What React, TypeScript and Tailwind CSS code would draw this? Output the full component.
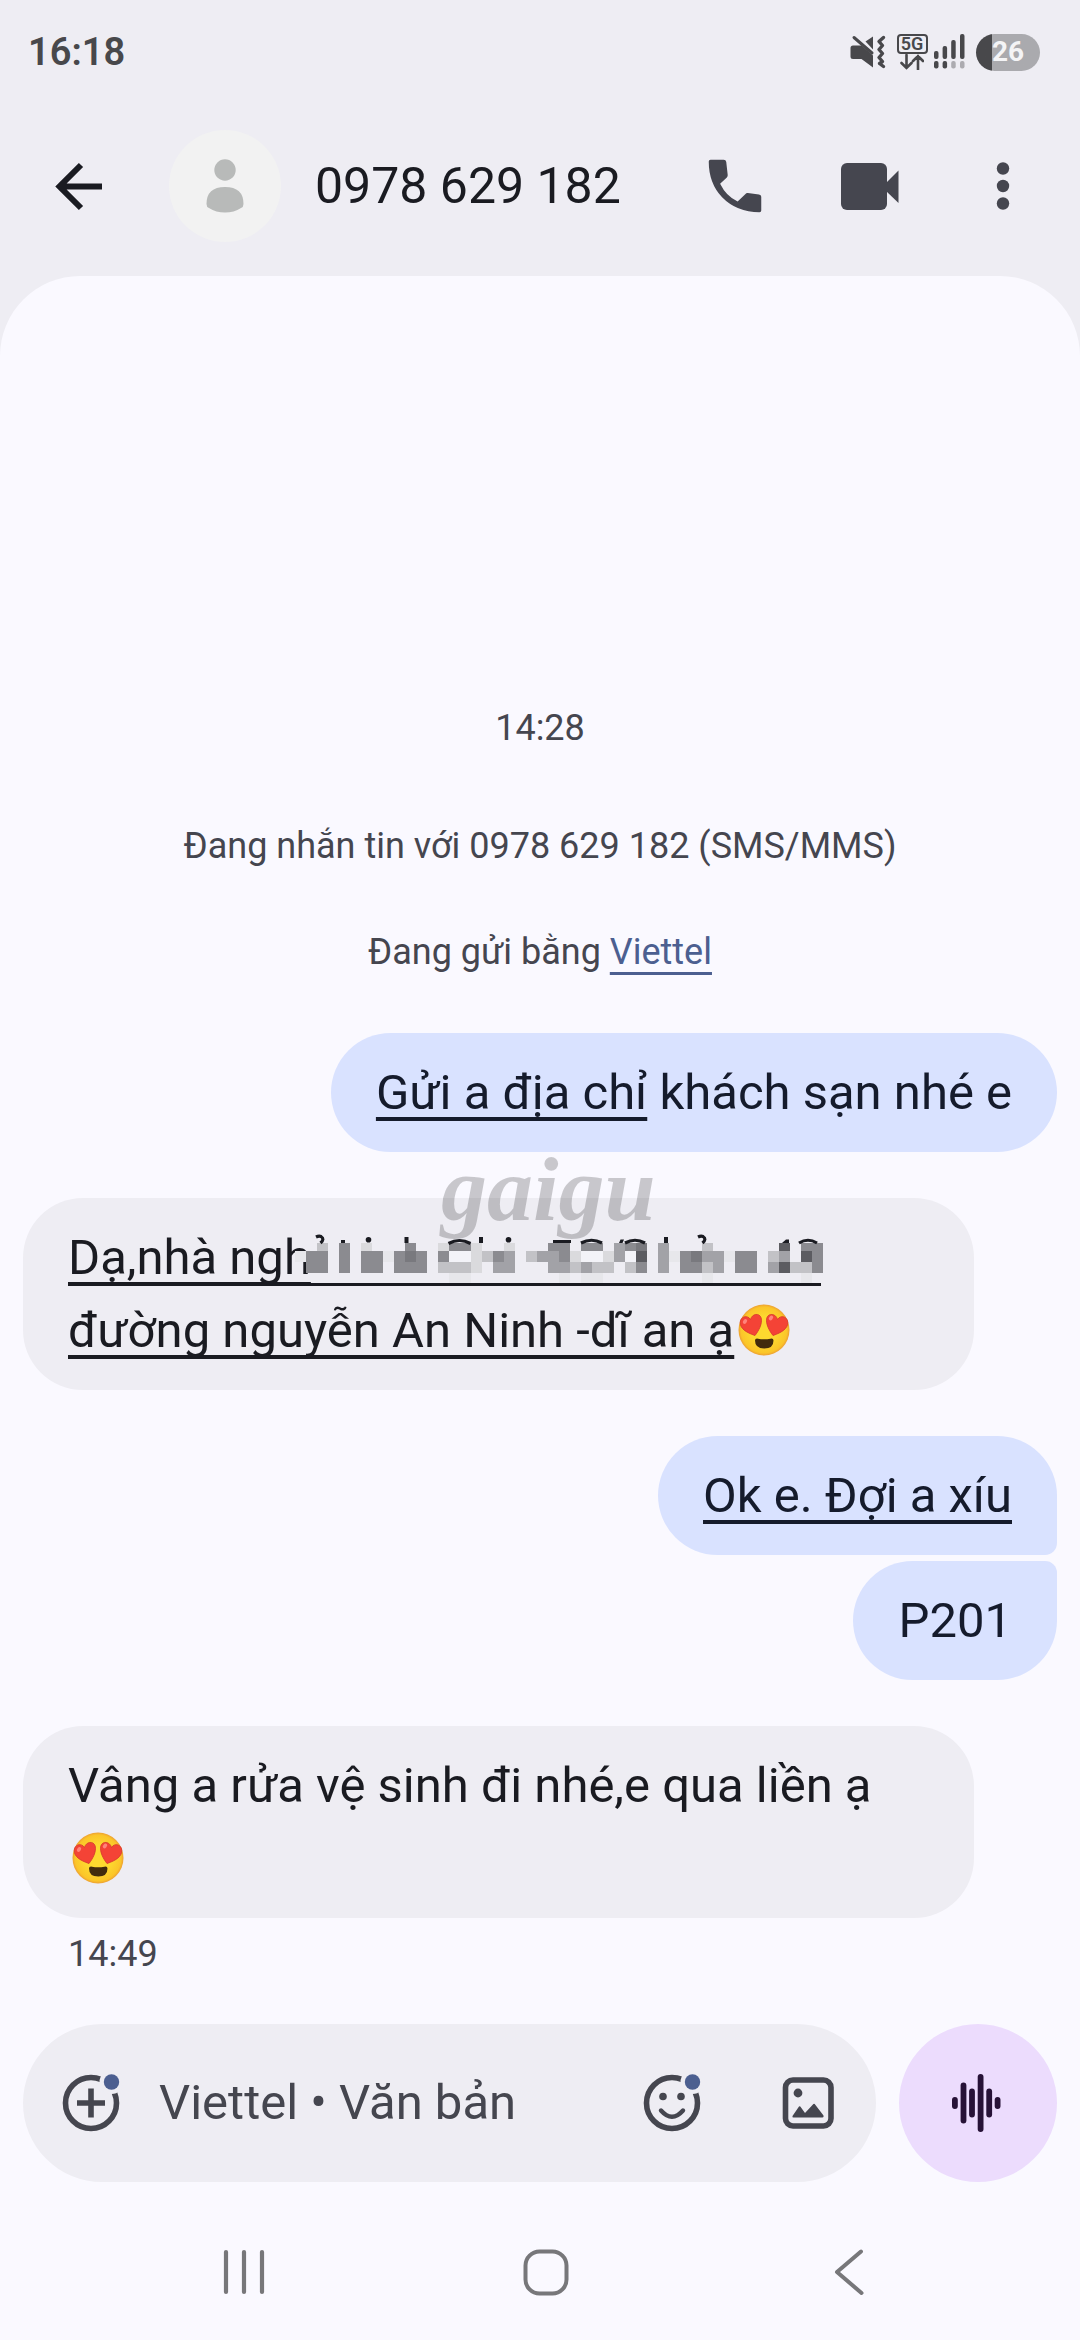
import React from 'react';

interface Message {
  id: number;
  mine: boolean;
  body: React.ReactNode;
  className?: string;
}

// One character per cell, from light (1) to dark (7), dots are empty.
const MOSAIC_ROWS = [
  { y: 13, h: 8, cells: '..3.5.2...5..2552..2...55.55.456.4...3......7.55' },
  { y: 21, h: 11, cells: '155.5.551565.5ww2354.34452ww24w7.415644155.34.75' },
  { y: 32, h: 11, cells: '.55.5.55.555.3332.44...443433.35.4.5534.55.47335' },
  { y: 43, h: 10, cells: '..............11........1.11.........1........1.' },
];

const MOSAIC_COLORS: Record<string, string> = {
  '1': '#e7e7eb',
  '2': '#dadadd',
  '3': '#c2c2c6',
  '4': '#a2a2a7',
  '5': '#8b8b90',
  '6': '#79797e',
  '7': '#5c5c61',
  w: '#f3f3f8',
};

const Mosaic: React.FC = () => (
  <svg
    width="528"
    height="60"
    viewBox="0 0 528 60"
    className="-ml-4 inline-block align-[-16px]"
    shapeRendering="crispEdges"
    aria-hidden="true"
  >
    {MOSAIC_ROWS.map((row) =>
      row.cells.split('').map((cell, i) =>
        cell === '.' ? null : (
          <rect key={`${row.y}-${i}`} x={i * 11} y={row.y} width="11" height={row.h} fill={MOSAIC_COLORS[cell]} />
        )
      )
    )}
    <g fill="#1a1b21" shapeRendering="auto">
      <rect x="46" y="10" width="4" height="3" />
      <circle cx="73.5" cy="9.7" r="2.8" />
      <rect x="109.5" y="7" width="4" height="6" />
      <rect x="184" y="7" width="4" height="6" />
      <circle cx="213.5" cy="9.7" r="2.8" />
      <rect x="258" y="10" width="18" height="3" />
      <path d="M324 13l1.5-3.500h3.500l-1.500 3.500z" />
      <rect x="369" y="7" width="4" height="6" />
      <path d="M487 13l4-3.500h3v3.500z" />
      <rect x="0" y="53" width="526" height="3" />
    </g>
    <g fill="none" stroke="#1a1b21" strokeWidth="3.2" shapeRendering="auto">
      <path d="M21 7q3-1.5 5-.5q4 2.5-.5 6.5" />
      <path d="M153.5 13.5q11-6 22 0" />
      <path d="M286 13q10.5-5.5 21 0" />
      <path d="M330 13q10-5.5 20 0" />
      <path d="M403 7q3-1.5 5-.5q4 2.5-.5 6.5" />
      <path d="M504 13q9-5.5 18 0" />
    </g>
  </svg>
);

const HeartEyes: React.FC = () => (
  <svg
    width="52"
    height="52"
    viewBox="0 0 52 52"
    className="mx-1 inline-block align-[-9px]"
    role="img"
    aria-label="😍"
  >
    <defs>
      <radialGradient id="face" cx="0.5" cy="0.5" r="0.5">
        <stop offset="0.5" stopColor="#fdd92f" />
        <stop offset="0.9" stopColor="#fbc529" />
        <stop offset="1" stopColor="#eda032" />
      </radialGradient>
    </defs>
    <circle cx="26" cy="26" r="25.5" fill="url(#face)" />
    <path
      d="M17 31.5C8 28.5 2.2 24.5 2.2 18.5C2.2 12.5 9.5 10.5 12.5 15.5C14 9.5 21.5 8.5 23.2 14C24.6 20 20.5 27 17 31.5Z"
      fill="#f44336"
      stroke="#d3352d"
      strokeWidth="0.8"
    />
    <path
      d="M35 31.5C44 28.5 49.8 24.5 49.8 18.5C49.8 12.5 42.5 10.5 39.5 15.5C38 9.5 30.5 8.5 28.8 14C27.4 20 31.5 27 35 31.5Z"
      fill="#f44336"
      stroke="#d3352d"
      strokeWidth="0.8"
    />
    <ellipse cx="7" cy="17.5" rx="2.6" ry="1.8" transform="rotate(-50 7 17.5)" fill="#ff847a" />
    <ellipse cx="33" cy="14" rx="2.6" ry="1.8" transform="rotate(-50 33 14)" fill="#ff847a" />
    <path
      d="M17 36.5Q17 34.2 20 34.7Q26 36 32.5 34.7Q35.5 34.2 35.5 36.5Q35.5 44.5 26.3 44.5Q17 44.5 17 36.5Z"
      fill="#422b0d"
    />
  </svg>
);

function Underlined({ children }: { children: React.ReactNode }) {
  return (
    <span className="underline decoration-4 underline-offset-8 [text-decoration-skip-ink:none]">{children}</span>
  );
}

const MESSAGES: Message[] = [
  {
    id: 1,
    mine: true,
    body: (
      <>
        <Underlined>Gửi a địa chỉ</Underlined> khách sạn nhé e
      </>
    ),
  },
  {
    id: 2,
    mine: false,
    className: 'mt-[46px]',
    body: (
      <>
        <Underlined>Dạ,nhà ngh</Underlined>
        <Mosaic /> <Underlined>đường nguyễn An Ninh -dĩ an ạ</Underlined>
        <HeartEyes />
      </>
    ),
  },
  {
    id: 3,
    mine: true,
    className: 'mt-[46px] rounded-br-xl',
    body: <Underlined>Ok e. Đợi a xíu</Underlined>,
  },
  { id: 4, mine: true, className: 'mt-1.5 rounded-tr-xl', body: 'P201' },
  {
    id: 5,
    mine: false,
    className: 'mt-[46px]',
    body: (
      <>
        Vâng a rửa vệ sinh đi nhé,e qua liền ạ <HeartEyes />
      </>
    ),
  },
];

const StatusBar: React.FC = () => (
  <div className="flex h-[104px] items-center justify-between pl-7 pr-10 text-[#48484b]">
    <span className="text-[38px] font-semibold leading-none">16:18</span>
    <div className="flex items-center">
      {/* muted, vibrating */}
      <svg width="36" height="34" viewBox="0 0 36 34" fill="currentColor" aria-hidden="true">
        <path d="M3 10.5h8.5L23 20.5V32.5L11.5 24H3Q.5 24 .5 21.5V13Q.5 10.5 3 10.5Z" />
        <path d="M15.5 6.5L23 1.5V14.5Z" />
        <path d="M4 2.5L22 18" stroke="currentColor" strokeWidth="3" strokeLinecap="round" />
        <path
          d="M33.5 2.5L29 6.5L32.5 10.5L29 14.5L32.5 18.5L29 22.5L32.5 26.5L29.5 28.5L33.5 31.5"
          fill="none"
          stroke="currentColor"
          strokeWidth="3.4"
          strokeLinecap="round"
          strokeLinejoin="round"
        />
      </svg>
      <div className="ml-2.5 flex w-8 flex-col items-center">
        <span className="flex h-5 w-[31px] items-center justify-center rounded-sm border-2 border-current text-lg font-semibold leading-none">
          5G
        </span>
        <svg width="24" height="16" viewBox="0 0 24 16" fill="none" stroke="currentColor" strokeWidth="2.6" aria-hidden="true">
          <path d="M6.5 1V14M1.5 9L6.5 14L11.5 9M18 15.5V2M13 7L18 2L23 7" strokeLinecap="round" />
        </svg>
      </div>
      <svg width="32" height="36" viewBox="0 0 32 36" className="ml-1.5" fill="currentColor" aria-hidden="true">
        <rect x="0" y="17" width="4.5" height="8" rx="2" />
        <rect x="8.6" y="12" width="4.5" height="13" rx="2" />
        <rect x="17.2" y="6" width="4.5" height="19" rx="2" />
        <rect x="26" y="0" width="4.5" height="25" rx="2" />
        <rect x="0" y="27" width="4.5" height="7.5" rx="2" />
        <rect x="8.6" y="27" width="4.5" height="7.5" rx="2" />
        <rect x="17.2" y="27" width="4.5" height="7.5" rx="2" opacity="0.4" />
        <rect x="26" y="27" width="4.5" height="7.5" rx="2" opacity="0.4" />
      </svg>
      <span className="ml-2.5 flex h-[37px] w-16 items-center justify-center rounded-full bg-linear-to-r from-[#48484b] from-25% to-[#aaaaae] to-25% text-[28px] font-bold leading-none text-[#f4f4f6]">
        26
      </span>
    </div>
  </div>
);

const Header: React.FC = () => (
  <header className="flex h-[172px] items-center pb-2 text-[#45464f]">
    <button aria-label="Quay lại" className="ml-11 shrink-0 text-[#1a1b21]">
      <svg width="70" height="70" viewBox="0 0 70 70" fill="none" stroke="currentColor" strokeWidth="6">
        <path d="M37 14L15.5 35.5L37 57M17 35.5H58" />
      </svg>
    </button>
    <div className="ml-[55px] flex size-28 shrink-0 items-center justify-center rounded-full bg-[#f2f2f2]">
      <svg width="38" height="56" viewBox="0 0 38 56" fill="#b8bab9" aria-hidden="true">
        <circle cx="19" cy="12" r="10.7" />
        <path d="M.5 46Q.5 29 19 29T37.5 46Q37.5 49 35 50Q28 54.5 19 54.5T3 50Q.5 49 .5 46Z" />
      </svg>
    </div>
    <h1 className="ml-[34px] flex-1 whitespace-nowrap text-[50px] leading-[60px] text-[#1a1b21]">0978 629 182</h1>
    <button aria-label="Gọi" className="shrink-0">
      <svg width="70" height="70" viewBox="0 0 24 24" fill="currentColor">
        <path d="M3.6 3H8.1Q8.9 3 9 3.8L9.5 8.2Q9.55 8.7 9.2 9.05L6.9 11.2Q9 15.5 12.9 17.3L15.6 14.7Q15.9 14.3 16.4 14.4L20.2 14.9Q21 15 21 15.7V20.4Q21 21 20.4 21Q12.5 21 7.5 15.8Q3 11 3 3.6Q3 3 3.6 3Z" />
      </svg>
    </button>
    <button aria-label="Gọi video" className="ml-16 shrink-0">
      <svg width="70" height="70" viewBox="0 0 70 70" fill="currentColor">
        <rect x="7" y="12" width="46" height="47" rx="6" />
        <path d="M52 32L64.5 19.5V52L52 40Z" />
      </svg>
    </button>
    <button aria-label="Tùy chọn khác" className="ml-16 mr-[42px] shrink-0">
      <svg width="70" height="70" viewBox="0 0 70 70" fill="currentColor">
        <circle cx="35" cy="17.5" r="6.2" />
        <circle cx="35" cy="35" r="6.2" />
        <circle cx="35" cy="52.5" r="6.2" />
      </svg>
    </button>
  </header>
);

const Composer: React.FC = () => (
  <div className="flex items-center gap-[23px] px-[23px] text-[#45464f]">
    <div className="flex h-[158px] min-w-0 flex-1 items-center rounded-full bg-[#eeedf3] px-8">
      <button aria-label="Đính kèm" className="shrink-0">
        <svg width="72" height="72" viewBox="0 0 72 72" fill="none">
          <circle cx="36" cy="36" r="25.5" stroke="currentColor" strokeWidth="5.6" />
          <path d="M36 21.5V50.5M22 36H50" stroke="currentColor" strokeWidth="5.6" />
          <circle cx="56.5" cy="15" r="12" fill="#eeedf3" />
          <circle cx="56.5" cy="15" r="7.7" fill="#4c5f90" />
        </svg>
      </button>
      <input
        type="text"
        aria-label="Tin nhắn"
        placeholder="Viettel • Văn bản"
        className="ml-8 min-w-0 flex-1 bg-transparent text-[49px] outline-none placeholder:text-[#45464f]"
      />
      <button aria-label="Biểu tượng cảm xúc" className="shrink-0">
        <svg width="72" height="72" viewBox="0 0 72 72" fill="none">
          <circle cx="36" cy="36" r="25.5" stroke="currentColor" strokeWidth="5.6" />
          <circle cx="27" cy="29.5" r="3.8" fill="currentColor" />
          <circle cx="45" cy="29.5" r="3.8" fill="currentColor" />
          <path d="M25 43.5Q36 56 47 43.5" stroke="currentColor" strokeWidth="4.4" strokeLinecap="round" />
          <circle cx="56.5" cy="15" r="12" fill="#eeedf3" />
          <circle cx="56.5" cy="15" r="7.7" fill="#4c5f90" />
        </svg>
      </button>
      <button aria-label="Thư viện ảnh" className="ml-16 shrink-0">
        <svg width="72" height="72" viewBox="0 0 72 72" fill="currentColor">
          <rect x="13.5" y="13" width="45.5" height="46" rx="7.5" fill="none" stroke="currentColor" strokeWidth="5.6" />
          <circle cx="26" cy="26" r="4.4" />
          <path d="M20.5 49L27 39.5Q27.7 38.8 28.3 39.5L33 46L41.4 37Q42 36.4 42.7 37L51.5 48.5Q52 50.5 50.5 50.5H21.5Q20 50.5 20.5 49Z" />
        </svg>
      </button>
    </div>
    <button
      aria-label="Ghi âm"
      className="flex size-[158px] shrink-0 items-center justify-center rounded-full bg-[#ecdcfd] text-[#271237]"
    >
      <svg width="52" height="60" viewBox="0 0 52 60" fill="currentColor">
        <rect x="0" y="24" width="5.8" height="12" rx="2.9" />
        <rect x="8.6" y="9.5" width="5.8" height="41" rx="2.9" />
        <rect x="17.1" y="15.5" width="5.8" height="29" rx="2.9" />
        <rect x="25.7" y="1" width="5.8" height="58" rx="2.9" />
        <rect x="34.3" y="15.5" width="5.8" height="29" rx="2.9" />
        <rect x="42.7" y="24" width="5.8" height="12" rx="2.9" />
      </svg>
    </button>
  </div>
);

const NavBar: React.FC = () => (
  <nav className="mt-[22px] flex h-[136px] items-center justify-center gap-[242px] pl-3 text-[#77777a]">
    <button aria-label="Ứng dụng gần đây">
      <svg width="60" height="60" viewBox="0 0 60 60" fill="none" stroke="currentColor" strokeWidth="4.2" strokeLinecap="round">
        <path d="M12 10V50M30 10V50M48 10V50" />
      </svg>
    </button>
    <button aria-label="Màn hình chính">
      <svg width="60" height="60" viewBox="0 0 60 60" fill="none" stroke="currentColor" strokeWidth="4">
        <rect x="9.5" y="9.5" width="41" height="42" rx="14" />
      </svg>
    </button>
    <button aria-label="Trở về">
      <svg
        width="60"
        height="60"
        viewBox="0 0 60 60"
        fill="none"
        stroke="currentColor"
        strokeWidth="4"
        strokeLinecap="round"
        strokeLinejoin="round"
      >
        <path d="M43 9.5L19 30L43.5 51" />
      </svg>
    </button>
  </nav>
);

const App: React.FC = () => {
  return (
    <div className="flex min-h-screen flex-col bg-[#eeedf3] font-[Roboto,sans-serif]">
      <StatusBar />
      <Header />
      <main className="flex flex-1 flex-col rounded-t-[80px] bg-[#faf9ff]">
        <div className="flex flex-1 flex-col justify-end px-[23px]">
          <div className="flex flex-col items-center text-4xl leading-[46px] text-[#45464f]">
            <p>14:28</p>
            <p className="mt-[72px]">Đang nhắn tin với 0978 629 182 (SMS/MMS)</p>
            <p className="mt-[60px]">
              Đang gửi bằng{' '}
              <a href="#carrier" className="text-[#4c5f90] underline decoration-3 underline-offset-8">
                Viettel
              </a>
            </p>
          </div>

          <div className="relative mt-[58px] flex flex-col text-[49px] leading-[73px] text-[#1a1b21]">
            {MESSAGES.map((message) => (
              <div
                key={message.id}
                className={`max-w-[92%] rounded-[60px] px-[45px] py-[23px] ${
                  message.mine ? 'self-end bg-[#d9e2ff] text-[#151b2c]' : 'self-start bg-[#eeedf3]'
                } ${message.className ?? ''}`}
              >
                {message.body}
              </div>
            ))}
            <span className="pointer-events-none absolute left-[418px] top-[96px] font-['Liberation_Serif',serif] text-[92px] font-bold italic leading-[120px] text-black/20">
              gaigu
            </span>
          </div>
          <time className="mb-[46px] ml-[45px] mt-3 text-4xl leading-[48px] text-[#45464f]">14:49</time>
        </div>
        <Composer />
        <NavBar />
      </main>
    </div>
  );
};

export default App;
